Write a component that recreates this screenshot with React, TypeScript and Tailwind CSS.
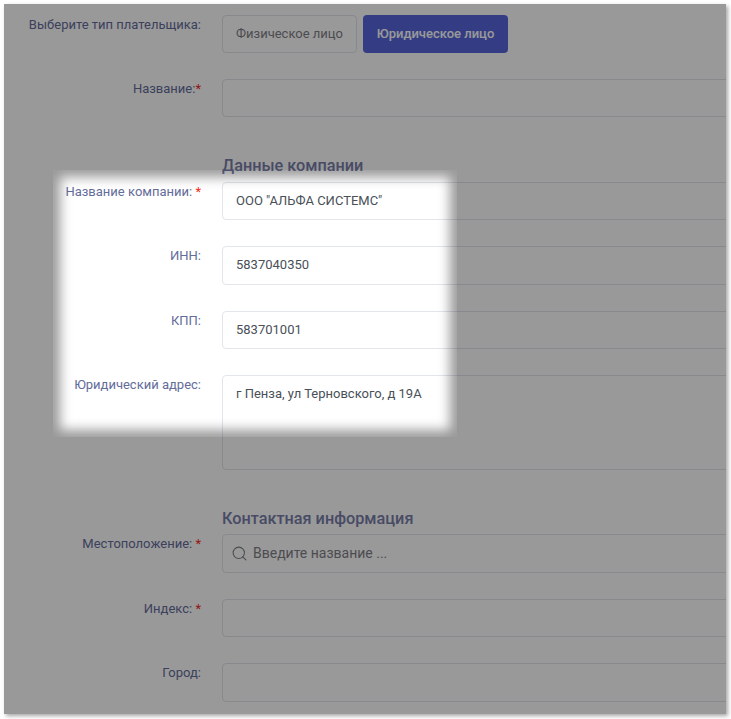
import { Search } from 'lucide-react';

function Row({ label, star, tight, children }: { label: string; star?: boolean; tight?: boolean; children: React.ReactNode }) {
  return (
    <div className="flex gap-[21px] mb-[26px]">
      <label className="w-[197px] shrink-0 text-right text-[13px] leading-[19.5px] text-[#646c9a]">
        {label}
        {star && <span className="text-[#f5291c]">{tight ? '*' : ' *'}</span>}
      </label>
      {children}
    </div>
  );
}

function Field({ value }: { value?: string }) {
  return (
    <div className="w-[600px] shrink-0 h-[38.4px] bg-white border border-[#e2e5ec] rounded-[4px] px-[13px] text-[13px] leading-[36px] text-[#495057]">
      {value}
    </div>
  );
}

function Heading({ children }: { children: React.ReactNode }) {
  return <h3 className="ml-[218px] text-[16.25px] leading-[19px] font-medium text-[#787da8]">{children}</h3>;
}

export default function App() {
  return (
    <div className="w-[731px] h-[719px] bg-white overflow-hidden pt-1 pl-1 font-['Roboto',sans-serif]">
      <div className="relative w-[722px] h-[710px] bg-white overflow-hidden shadow-[2px_2px_4px_rgba(0,0,0,0.35)] pt-[11px]">
        <Row label="Выберите тип плательщика:">
          <div className="flex gap-[6px]">
            <button className="w-[135px] h-[38px] border border-[#e2e5ec] rounded-[4px] text-[13px] text-[#7f8087]">Физическое лицо</button>
            <button className="w-[145px] h-[38px] bg-[#5867dd] rounded-[4px] text-[13px] font-medium text-white">Юридическое лицо</button>
          </div>
        </Row>
        <Row label="Название:" star tight>
          <Field />
        </Row>

        <div className="mt-[38.6px] mb-[7px]">
          <Heading>Данные компании</Heading>
        </div>
        <Row label="Название компании:" star>
          <Field value={'ООО "АЛЬФА СИСТЕМС"'} />
        </Row>
        <Row label="ИНН:">
          <Field value="5837040350" />
        </Row>
        <Row label="КПП:">
          <Field value="583701001" />
        </Row>
        <Row label="Юридический адрес:">
          <div className="w-[600px] shrink-0 h-[95px] bg-white border border-[#e2e5ec] rounded-[4px] px-[13px] pt-[8px] text-[13px] leading-[19.5px] text-[#495057]">
            г Пенза, ул Терновского, д 19А
          </div>
        </Row>

        <div className="mt-[39px] mb-[6px]">
          <Heading>Контактная информация</Heading>
        </div>
        <Row label="Местоположение:" star>
          <div className="w-[600px] shrink-0 h-[38.8px] bg-white border border-[#e2e5ec] rounded-[4px] pl-[8px] flex items-center gap-[5px] text-[14px] text-[#7f8087]">
            <Search size={17} strokeWidth={1.5} className="text-[#7f8087]" />
            Введите название ...
          </div>
        </Row>
        <Row label="Индекс:" star>
          <Field />
        </Row>
        <Row label="Город:">
          <Field />
        </Row>

        {/* затемнение с вырезом */}
        <div className="absolute left-[49px] top-[166px] w-[404px] h-[267px] shadow-[0_0_0_2000px_rgba(0,0,0,0.4),inset_0_0_12px_7px_rgba(0,0,0,0.4)]" />
      </div>
    </div>
  );
}
